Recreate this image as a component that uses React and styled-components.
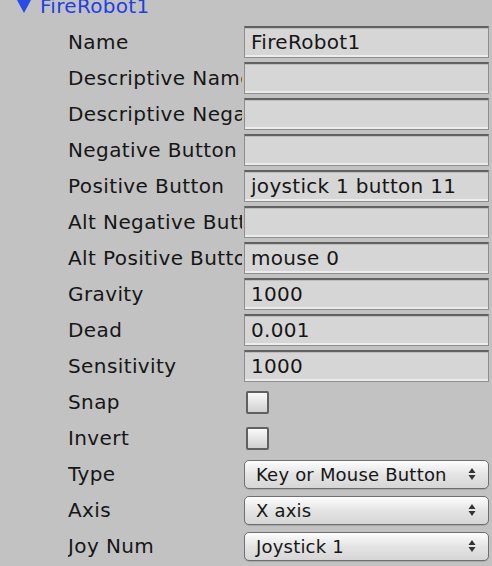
import React from 'react';
import styled, { createGlobalStyle } from 'styled-components';

const Global = createGlobalStyle`
  body {
    margin: 0;
    background: #c2c2c2;
    font-family: "DejaVu Sans", "Liberation Sans", sans-serif;
  }
`;

const Panel = styled.div`
  width: 492px;
  height: 566px;
  overflow: hidden;
  background: #c2c2c2;
`;

const Header = styled.div`
  height: 24px;
  display: flex;
  align-items: flex-start;
  gap: 9px;
  padding-left: 17px;
  color: #1f3fe4;
  font-size: 20px;
  overflow: hidden;
`;

const HeaderText = styled.span`
  line-height: 24px;
  margin-top: -6px;
  letter-spacing: 0.3px;
`;

const Row = styled.div`
  height: 36px;
  display: flex;
  align-items: center;
  padding-left: 68px;
`;

const Label = styled.div`
  width: 174px;
  margin-right: 2px;
  flex: none;
  font-size: 20px;
  letter-spacing: 0.4px;
  color: #161616;
  white-space: nowrap;
  overflow: hidden;
`;

const Field = styled.div`
  box-sizing: border-box;
  width: 245px;
  height: 32px;
  background: #d6d6d6;
  border: 1px solid #8e8e8e;
  border-top: 2px solid #626262;
  box-shadow: inset 0 1px 0 #bdbdbd, inset 0 -2px 0 #ececec;
  padding: 0 6px;
  font-size: 20px;
  letter-spacing: 0.3px;
  line-height: 28px;
  color: #161616;
  white-space: nowrap;
  overflow: hidden;
`;

const Check = styled.div`
  box-sizing: border-box;
  width: 23px;
  height: 23px;
  margin-left: 2px;
  border: 2px solid #606060;
  border-radius: 2px;
  background: linear-gradient(#fafafa, #d0d0d0);
`;

const Select = styled.div`
  box-sizing: border-box;
  width: 245px;
  height: 29px;
  display: flex;
  align-items: center;
  justify-content: space-between;
  padding: 0 12px 0 11px;
  border: 1px solid #6f6f6f;
  border-radius: 5px;
  background: linear-gradient(#fdfdfd, #e4e4e4 50%, #d6d6d6);
  box-shadow: 0 1px 0 #a8a8a8;
  font-size: 18px;
  letter-spacing: 0.2px;
  color: #161616;
`;

const Arrows = () => (
  <svg width="8" height="14" viewBox="0 0 8 14">
    <path d="M4 1 L7.5 6 L0.5 6 Z" fill="#333" />
    <path d="M4 13 L7.5 8 L0.5 8 Z" fill="#333" />
  </svg>
);

const Triangle = () => (
  <svg width="14" height="13" viewBox="0 0 14 13">
    <path d="M0 0 L14 0 L7 13 Z" fill="#2a4be8" />
  </svg>
);

const text = [
  ['Name', 'FireRobot1'],
  ['Descriptive Name', ''],
  ['Descriptive Negative Name', ''],
  ['Negative Button', ''],
  ['Positive Button', 'joystick 1 button 11'],
  ['Alt Negative Button', ''],
  ['Alt Positive Button', 'mouse 0'],
  ['Gravity', '1000'],
  ['Dead', '0.001'],
  ['Sensitivity', '1000'],
];

const selects = [
  ['Type', 'Key or Mouse Button'],
  ['Axis', 'X axis'],
  ['Joy Num', 'Joystick 1'],
];

export default function App() {
  return (
    <Panel>
      <Global />
      <Header>
        <Triangle />
        <HeaderText>FireRobot1</HeaderText>
      </Header>
      {text.map(([label, value]) => (
        <Row key={label}>
          <Label>{label}</Label>
          <Field>{value}</Field>
        </Row>
      ))}
      <Row>
        <Label>Snap</Label>
        <Check />
      </Row>
      <Row>
        <Label>Invert</Label>
        <Check />
      </Row>
      {selects.map(([label, value]) => (
        <Row key={label}>
          <Label>{label}</Label>
          <Select>
            {value}
            <Arrows />
          </Select>
        </Row>
      ))}
    </Panel>
  );
}
